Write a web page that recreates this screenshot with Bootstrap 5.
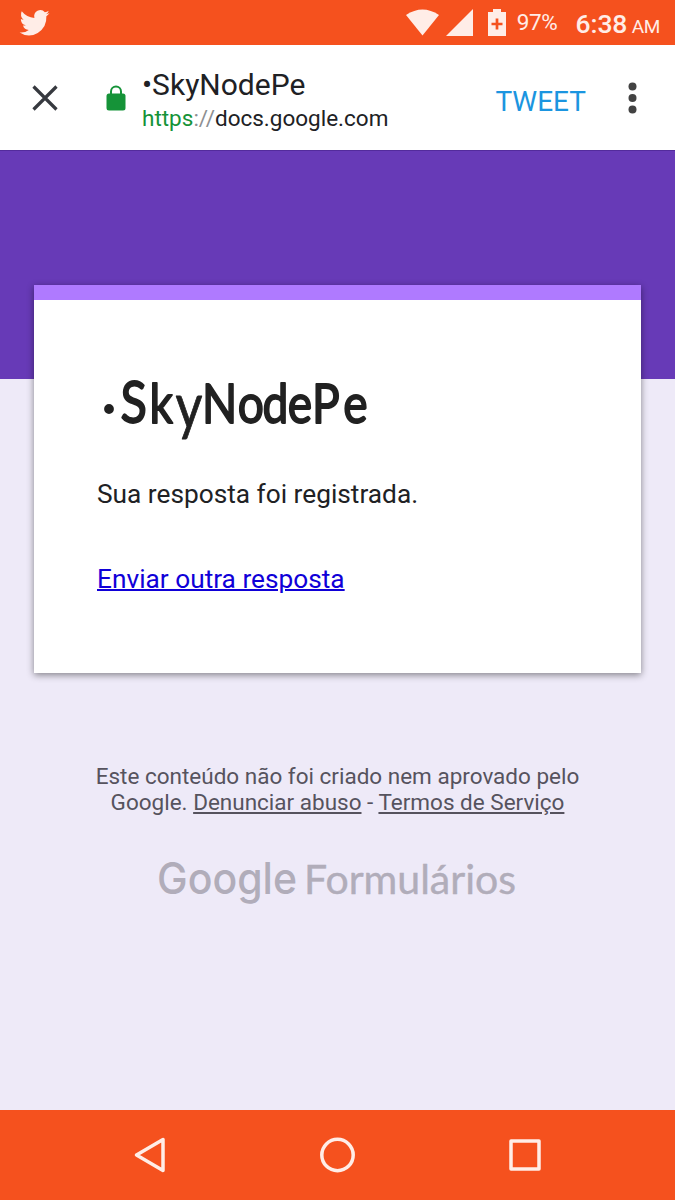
<!DOCTYPE html>
<html lang="pt-BR">
<head>
<meta charset="utf-8">
<meta name="viewport" content="width=device-width, initial-scale=1">
<title>•SkyNodePe</title>
<link href="https://cdn.jsdelivr.net/npm/bootstrap@5.3.0/dist/css/bootstrap.min.css" rel="stylesheet">
<style>
body{font-family:Roboto,"Liberation Sans",sans-serif;background:#eeeaf8;color:#202124;height:1200px;overflow:hidden}
svg{display:block;flex:none;overflow:visible}
.status{height:45px;background:#f5511e;color:#ffede7;padding:0 15px 0 20px}
.battery-level{font-size:22.5px;margin-left:11px;letter-spacing:-.3px}
.clock{font-size:26.5px;margin-left:18px;white-space:nowrap;letter-spacing:-.1px;margin-top:2px}
.clock span{font-size:19px;margin-left:-2px;letter-spacing:-.4px}
.toolbar{height:105px;background:#fff;padding:0 38px 0 32px}
.page-title{font-size:30px;line-height:34px}
.page-url{font-size:22.5px;line-height:28px;margin-top:2px}
.secure{color:#159338}
.sep{color:#8d8f92}
.tweet{font-size:28px;line-height:34px;color:#1b95e0}
.banner{height:229px;background:#673ab7;border-top:1px solid #532b9c}
.form-card{width:607px;height:388px;margin-top:-94px;border-top:15px solid #af7aff;background:#fff;box-shadow:0 2px 7px rgba(0,0,0,.45);padding:65px 0 0 63px}
.answer{font-size:26.25px;line-height:30px}
.again{color:#1000d8;text-decoration-thickness:2px}
.legal{font-size:22.5px;line-height:26px;color:#56535e;margin-top:90px}
.legal a{color:#56535e}
.navkeys{height:90px;background:#f5511e}
</style>
</head>
<body class="d-flex flex-column">
<header class="status d-flex align-items-center flex-shrink-0">
  <svg width="30" height="26" viewBox="0 0 24 20" preserveAspectRatio="none" fill="#ffede7"><path d="M23.6 2.4a9.7 9.7 0 0 1-2.8.8A4.9 4.9 0 0 0 23 .5a9.900 9.900 0 0 1-3.100 1.200A4.900 4.900 0 0 0 11.500 6.100 13.900 13.900 0 0 1 1.400 1a4.900 4.900 0 0 0 1.500 6.500A4.900 4.900 0 0 1 .7 6.900a4.900 4.900 0 0 0 3.900 4.900 4.900 4.900 0 0 1-2.200.1 4.900 4.900 0 0 0 4.600 3.400A9.900 9.900 0 0 1-.3 17.300 13.900 13.900 0 0 0 21.100 4.900a10 10 0 0 0 2.500-2.500z"/></svg>
  <div class="d-flex align-items-center ms-auto">
    <svg width="33" height="27" viewBox="0 0 33 27" fill="#ffede7"><path d="M0 6Q16.500-5 33 6L16.500 26.500z"/></svg>
    <svg width="27" height="27" viewBox="0 0 27 27" fill="#ffede7" style="margin-left:7px"><path d="M27 0v27H0z"/></svg>
    <svg width="18" height="27" viewBox="0 0 18 27" style="margin-left:15px"><path fill="#ffede7" d="M5 0h8v3h5v24H0V3h5z"/><path stroke="#f5511e" stroke-width="2.700" d="M9 9.500v11M3.500 15h11"/></svg>
    <span class="battery-level">97%</span>
    <div class="clock fw-medium">6:38 <span class="fw-normal">AM</span></div>
  </div>
</header>
<nav class="toolbar d-flex align-items-center flex-shrink-0">
  <svg width="26" height="26" viewBox="0 0 26 26" stroke="#36393f" stroke-width="3.200"><path d="M1.500 1.500l23 23M24.500 1.500l-23 23"/></svg>
  <svg width="20" height="26" viewBox="0 0 20 26" style="margin-left:48px"><rect x=".5" y="8.500" width="19" height="17" rx="2.500" fill="#159338"/><path d="M5 10V6.500a5 5 0 0 1 10 0V10" fill="none" stroke="#159338" stroke-width="2"/></svg>
  <div class="pt-1" style="margin-left:16px">
    <div class="page-title">•SkyNodePe</div>
    <div class="page-url"><span class="secure">https</span><span class="sep">://</span>docs.google.com</div>
  </div>
  <span class="tweet ms-auto pt-2">TWEET</span>
  <svg width="9" height="32" viewBox="0 0 9 32" fill="#424242" style="margin-left:42px"><circle cx="4.500" cy="4.500" r="4"/><circle cx="4.500" cy="16" r="4"/><circle cx="4.500" cy="27.500" r="4"/></svg>
</nav>
<main class="flex-grow-1">
  <div class="banner"></div>
  <section class="form-card position-relative mx-auto">
    <svg width="290" height="100" viewBox="97 365 290 100" font-family="Lato, sans-serif" font-size="55" fill="#212121" stroke="#212121" stroke-width="1.800" stroke-linejoin="round">
      <circle cx="109" cy="409" r="4"/>
      <text transform="scale(.84 1)" y="423.500" x="143.500 178"><tspan font-size="58">S</tspan>k<tspan x="209" dy="5" font-size="62" stroke-width=".8">y</tspan><tspan dy="-5" x="240.500 283 312.500 342.500 371.500 408.500">NodePe</tspan></text>
    </svg>
    <p class="answer mb-0" style="margin-top:14px">Sua resposta foi registrada.</p>
    <p class="answer mb-0" style="margin-top:55px"><a class="again" href="#">Enviar outra resposta</a></p>
  </section>
  <footer class="text-center">
    <p class="legal mb-0">Este conteúdo não foi criado nem aprovado pelo<br>Google. <a href="#">Denunciar abuso</a> - <a href="#">Termos de Serviço</a></p>
    <svg class="mx-auto" width="381" height="66" viewBox="147 850 381 66" style="margin-top:34px" fill="#b1adba" font-family="Lato, sans-serif">
      <text x="157" y="894.500" font-family="Inter, sans-serif" font-size="44" font-weight="500" textLength="140" lengthAdjust="spacingAndGlyphs">Google</text>
      <text x="304" y="895" font-size="40" stroke="#b1adba" stroke-width=".4" textLength="212" lengthAdjust="spacingAndGlyphs">Formulários</text>
    </svg>
  </footer>
</main>
<nav class="navkeys flex-shrink-0 d-flex justify-content-center align-items-center">
  <svg width="410" height="38" viewBox="133 1136 410 38" fill="none" stroke="#ffede7" stroke-width="3.500" stroke-linejoin="round"><path d="M136.500 1155l26.500-15.500v31z"/><circle cx="337.500" cy="1155" r="15.700"/><rect x="511" y="1141" width="28" height="28"/></svg>
</nav>
<script src="https://cdn.jsdelivr.net/npm/bootstrap@5.3.0/dist/js/bootstrap.bundle.min.js"></script>
</body>
</html>
